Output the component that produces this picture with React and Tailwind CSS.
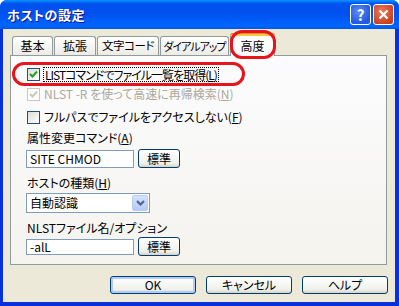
import React from "react";

const font = {
  fontFamily: '"Noto Sans CJK JP", "Noto Sans", sans-serif',
  fontFeatureSettings: '"palt"',
};

const Tab = ({ label, w, selected, text = "text-[12px]" }) =>
  selected ? (
    <div
      className={`relative z-10 -mb-px h-[23px] ${w} flex items-center justify-center border border-b-0 border-[#919B9C] rounded-t-[3px] bg-[#FCFCFE] ${text} text-black whitespace-nowrap`}
    >
      <div className="absolute -left-px -right-px -top-px h-[3px] rounded-t-[3px] bg-[#FFC83C] border-t border-[#E68B2C]" />
      <span className="mt-[1px]">{label}</span>
    </div>
  ) : (
    <div
      className={`h-[19px] ${w} flex items-center justify-center border border-b-0 border-[#919B9C] rounded-t-[3px] bg-[linear-gradient(#FFFFFF,#ECEBE6)] ${text} text-black whitespace-nowrap`}
    >
      {label}
    </div>
  );

const CheckBox = ({ checked, disabled }) => (
  <div
    className={`w-[13px] h-[13px] shrink-0 border flex items-center justify-center ${
      disabled
        ? "border-[#CAC8BB] bg-white"
        : "border-[#1C5180] bg-[linear-gradient(135deg,#DCDCD7,#FFFFFF)]"
    }`}
  >
    {checked && (
      <svg width="9" height="9" viewBox="0 0 9 9">
        <path
          d="M1 4 L3.5 6.5 L8 1.5"
          fill="none"
          stroke={disabled ? "#CAC8BB" : "#21A121"}
          strokeWidth="2"
        />
      </svg>
    )}
  </div>
);

const Button = ({ children, w = "w-[42px]", h = "h-[19px]", focused }) => (
  <div
    className={`${w} ${h} shrink-0 rounded-[3px] border border-[#003C74] bg-[linear-gradient(#FFFFFF,#F0F0EA_80%,#D6D0C5)] flex items-center justify-center text-[12px] text-black ${
      focused ? "shadow-[inset_0_0_0_2px_#B3CCF5]" : ""
    }`}
  >
    {children}
  </div>
);

export default function App() {
  return (
    <div
      className="w-[399px] h-[306px] flex flex-col bg-[#0831D9] rounded-t-[7px] overflow-hidden"
      style={font}
    >
      {/* title bar */}
      <div className="h-[29px] shrink-0 flex items-center justify-between pl-[7px] pr-[5px] bg-[linear-gradient(#0997FF,#0053EE_12%,#0050EE_45%,#0066FF_90%,#0055EA)]">
        <span className="text-white font-bold text-[13px] tracking-[0.5px] [text-shadow:1px_1px_#0F1089]">
          ホストの設定
        </span>
        <div className="flex gap-[2px] items-center">
          <div className="w-[21px] h-[21px] rounded-[3px] border border-white bg-[radial-gradient(circle_at_40%_35%,#5D8EF5,#2358E0_70%)] flex items-center justify-center text-white font-bold text-[15px] leading-none">
            ?
          </div>
          <div className="w-[21px] h-[21px] rounded-[3px] border border-white bg-[radial-gradient(circle_at_40%_35%,#E97A5F,#C9411C_75%)] flex items-center justify-center">
            <svg width="11" height="11" viewBox="0 0 11 11">
              <path d="M1.5 1.5 L9.5 9.5 M9.5 1.5 L1.5 9.5" stroke="#fff" strokeWidth="2.2" />
            </svg>
          </div>
        </div>
      </div>

      {/* body */}
      <div className="relative flex-1 ml-[3px] mr-[4px] mb-[4px] bg-[#ECE9D8] pt-[4px]">
        {/* tabs */}
        <div className="flex items-end h-[22px] pl-[9px] gap-[1px]">
          <Tab label="基本" w="w-[41px]" />
          <Tab label="拡張" w="w-[42px]" />
          <Tab label="文字コード" w="w-[62px]" text="text-[11.5px] tracking-[-0.5px]" />
          <Tab label="ダイアルアップ" w="w-[69px]" text="text-[11px] tracking-[-1px]" />
          <Tab label="高度" w="w-[45px]" selected />
        </div>

        {/* panel */}
        <div className="ml-[7px] w-[377px] h-[210px] border border-[#919B9C] bg-[linear-gradient(#FCFCFE,#F4F3EE)] pl-[16px] pt-[11px] text-[12px] text-black">
          <div className="flex items-center h-[14px] gap-[3px]">
            <CheckBox checked />
            <span className="border border-dotted border-black px-[1px] leading-[13px] tracking-[-1px]">
              LISTコマンドでファイル一覧を取得(<u>L</u>)
            </span>
          </div>
          <div className="flex items-center h-[14px] gap-[4px] mt-[6px] text-[#ACA899]">
            <CheckBox checked disabled />
            <span>
              NLST -R を使って高速に再帰検索(<u>N</u>)
            </span>
          </div>
          <div className="flex items-center h-[14px] gap-[4px] mt-[9px]">
            <CheckBox />
            <span>
              フルパスでファイルをアクセスしない(<u>F</u>)
            </span>
          </div>

          <div className="mt-[7px] h-[14px] flex items-center">
            属性変更コマンド(<u>A</u>)
          </div>
          <div className="flex items-center gap-[4px] mt-[4px] -ml-[1px]">
            <div className="w-[108px] h-[18px] border border-[#7F9DB9] bg-white flex items-center pl-[3px]">
              SITE CHMOD
            </div>
            <Button>標準</Button>
          </div>

          <div className="mt-[8px] h-[14px] flex items-center">
            ホストの種類(<u>H</u>)
          </div>
          <div className="mt-[3px] -ml-[1px] w-[124px] h-[20px] border border-[#7F9DB9] bg-white flex items-center justify-between pl-[3px] pr-[1px]">
            <span>自動認識</span>
            <div className="w-[16px] h-[16px] rounded-[2px] bg-[linear-gradient(#D4E2FD,#B4C9F8)] border border-[#B9CCF5] flex items-center justify-center">
              <svg width="9" height="6" viewBox="0 0 9 6">
                <path d="M1 1 L4.5 4.5 L8 1" fill="none" stroke="#4D6185" strokeWidth="2" />
              </svg>
            </div>
          </div>

          <div className="mt-[8px] h-[14px] flex items-center">
            NLSTファイル名/オプション
          </div>
          <div className="flex items-center gap-[4px] mt-[2px] -ml-[1px]">
            <div className="w-[108px] h-[16px] border border-[#7F9DB9] bg-white flex items-center pl-[3px]">
              -alL
            </div>
            <Button>標準</Button>
          </div>
        </div>

        {/* buttons */}
        <div className="flex justify-end gap-[10px] mt-[11px] pr-[7px]">
          <Button w="w-[86px]" h="h-[18px]" focused>
            OK
          </Button>
          <Button w="w-[86px]" h="h-[18px]">
            キャンセル
          </Button>
          <Button w="w-[86px]" h="h-[18px]">
            ヘルプ
          </Button>
        </div>

        {/* red annotation marks */}
        <div className="absolute z-20 left-[227px] top-[1px] w-[46px] h-[29px] rounded-[12px] border-[3px] border-[#E8141B]" />
        <div className="absolute z-20 left-[9px] top-[33px] w-[233px] h-[24px] rounded-[12px] border-[3px] border-[#E8141B]" />
      </div>
    </div>
  );
}
